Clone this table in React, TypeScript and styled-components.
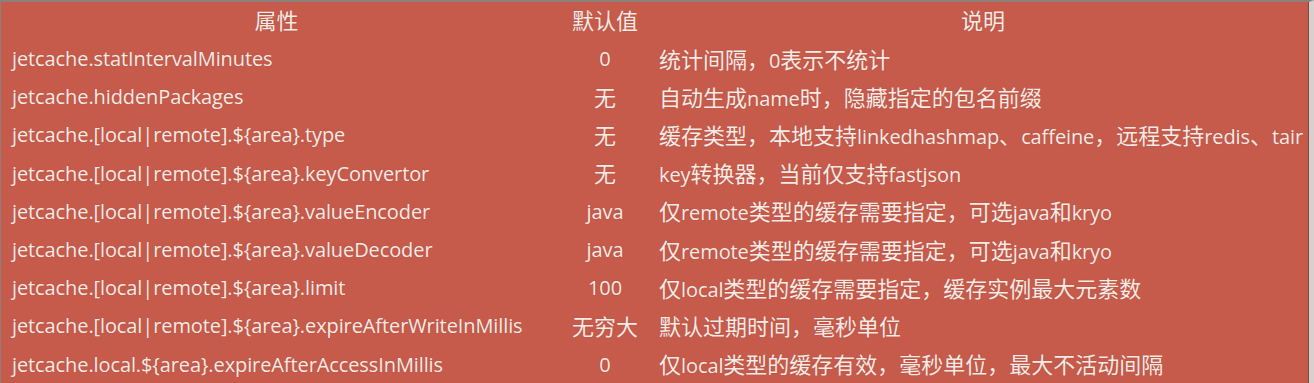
import React from 'react';
import styled, { createGlobalStyle } from 'styled-components';

interface ConfigRow {
  key: string;
  def: string;
  desc: string;
}

const rows: ConfigRow[] = [
  { key: 'jetcache.statIntervalMinutes', def: '0', desc: '统计间隔，0表示不统计' },
  { key: 'jetcache.hiddenPackages', def: '无', desc: '自动生成name时，隐藏指定的包名前缀' },
  {
    key: 'jetcache.[local|remote].${area}.type',
    def: '无',
    desc: '缓存类型，本地支持linkedhashmap、caffeine，远程支持redis、tair',
  },
  { key: 'jetcache.[local|remote].${area}.keyConvertor', def: '无', desc: 'key转换器，当前仅支持fastjson' },
  { key: 'jetcache.[local|remote].${area}.valueEncoder', def: 'java', desc: '仅remote类型的缓存需要指定，可选java和kryo' },
  { key: 'jetcache.[local|remote].${area}.valueDecoder', def: 'java', desc: '仅remote类型的缓存需要指定，可选java和kryo' },
  { key: 'jetcache.[local|remote].${area}.limit', def: '100', desc: '仅local类型的缓存需要指定，缓存实例最大元素数' },
  { key: 'jetcache.[local|remote].${area}.expireAfterWriteInMillis', def: '无穷大', desc: '默认过期时间，毫秒单位' },
  { key: 'jetcache.local.${area}.expireAfterAccessInMillis', def: '0', desc: '仅local类型的缓存有效，毫秒单位，最大不活动间隔' },
];

const GlobalStyle = createGlobalStyle`
  html, body {
    margin: 0;
    padding: 0;
    background: #c9c2c0;
  }
  body {
    font-family: 'Open Sans', 'Noto Sans CJK SC', sans-serif;
  }
`;

// the slide font sets Chinese a little larger than the latin letters,
// so Han runs get their own span inside one inline line
const HAN = /([\u3000-\u303f\u4e00-\u9fff\uff00-\uffef]+)/;

const Mixed = ({ text }: { text: string }) => (
  <Line>
    {text.split(HAN).map((part, i) => (part && HAN.test(part) ? <Han key={i}>{part}</Han> : part))}
  </Line>
);

export default function App() {
  return (
    <>
      <GlobalStyle />
      <Frame>
        <Table>
          <HeadCell>
            <Mixed text="属性" />
          </HeadCell>
          <HeadCell>
            <Mixed text="默认值" />
          </HeadCell>
          <HeadCell>
            <Mixed text="说明" />
          </HeadCell>
          {rows.map((r) => (
            <React.Fragment key={r.key}>
              <KeyCell>
                <Mixed text={r.key} />
              </KeyCell>
              <DefaultCell>
                <Mixed text={r.def} />
              </DefaultCell>
              <DescCell>
                <Mixed text={r.desc} />
              </DescCell>
            </React.Fragment>
          ))}
        </Table>
      </Frame>
    </>
  );
}

const Frame = styled.div`
  width: 1314px;
  height: 383px;
  box-sizing: border-box;
  border-top: 2px solid #8c7f7d;
  border-left: 1px solid #8c7f7d;
  border-right: 5px solid #d9cfcd;
  background: #c65b4c;
  overflow: hidden;
`;

const Table = styled.div`
  display: grid;
  grid-template-columns: 551px 106px 1fr;
  grid-template-rows: 38px repeat(9, 38.2px);
  height: 100%;
  border-right: 1px solid #7d4a42;
  color: #f6ebe5;
  font-size: 20px;
  text-shadow: 0 0 1px rgba(120, 40, 30, 0.35);
`;

const Cell = styled.div`
  display: flex;
  align-items: center;
  white-space: pre;
  overflow: hidden;
`;

const Line = styled.span`
  line-height: 28px;
  letter-spacing: -0.1px;
`;

const Han = styled.span`
  font-family: 'Noto Sans CJK SC', sans-serif;
  font-size: 22px;
  letter-spacing: 0;
  line-height: 28px;
`;

const HeadCell = styled(Cell)`
  justify-content: center;
  padding-bottom: 2px;
`;

const KeyCell = styled(Cell)`
  padding-left: 11px;
`;

const DefaultCell = styled(Cell)`
  justify-content: center;
`;

const DescCell = styled(Cell)`
  padding-left: 1px;
`;
